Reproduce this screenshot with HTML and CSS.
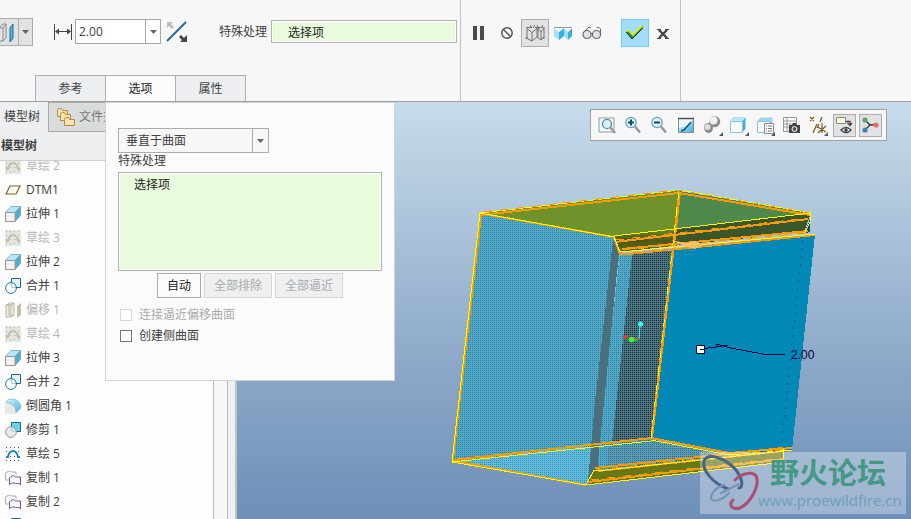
FILE: index.html
```html
<!DOCTYPE html>
<html lang="zh-CN">
<head>
    <meta charset="UTF-8">
    <meta name="viewport" content="width=device-width, initial-scale=1.0">
    <title>偏移</title>
    <link rel="stylesheet" href="styles.css">
</head>
<body>
    <!-- Shared icons -->
    <svg class="sprite" aria-hidden="true">
        <defs>
            <pattern id="grid-dots" width="4" height="4" patternUnits="userSpaceOnUse">
                <rect x="1" y="1" width="1" height="1" fill="#b5b5b0"/>
            </pattern>
            <linearGradient id="ice" x1="0" y1="0" x2="1" y2="1">
                <stop offset="0" stop-color="#d9f2fb"/>
                <stop offset="1" stop-color="#45b3e0"/>
            </linearGradient>
        </defs>
        <symbol id="i-sketch-off" viewBox="0 0 16 16">
            <rect width="16" height="16" fill="#e4e4e1"/>
            <rect width="16" height="16" fill="url(#grid-dots)"/>
            <path d="M1 11h2q1-6 5-6t5 6h2" fill="none" stroke="#c3bfa4" stroke-width="1.800"/>
        </symbol>
        <symbol id="i-sketch" viewBox="0 0 16 16">
            <path d="M1 1.500h1M5 1.500h1M9 1.500h1M13 1.500h1M1 5.500h1M13 5.500h1M5 10.500h1M9 10.500h1M1 14.500h1M5 14.500h1M9 14.500h1M13 14.500h1" stroke="#555"/>
            <path d="M1 11h2q1-6 5-6t5 6h2" fill="none" stroke="#1d87b5" stroke-width="1.800"/>
        </symbol>
        <symbol id="i-plane" viewBox="0 0 16 16">
            <path d="M5 4h10l-4 8H1z" fill="#fffdf5" stroke="#806220" stroke-width="1.200"/>
        </symbol>
        <symbol id="i-extrude" viewBox="0 0 16 16">
            <path d="M.5 6.500L6 .5h9.500L10 6.500z" fill="#b9e5f5" stroke="#8fb5c4"/>
            <path d="M10 6.500L15.500.5v9L10 15.500z" fill="#48aed8" stroke="#7fa9ba"/>
            <rect x=".5" y="6.500" width="9.500" height="9" fill="#f1f1f1" stroke="#999"/>
        </symbol>
        <symbol id="i-merge" viewBox="0 0 16 16">
            <path d="M6.500 6V.5h9v9H11" fill="#e4f5fb" stroke="#17688a"/>
            <path d="M6.500 5v4.500H11" fill="none" stroke="#9aa"/>
            <circle cx="6" cy="10" r="5.400" fill="#fff" fill-opacity=".4" stroke="#1b7398"/>
        </symbol>
        <symbol id="i-offset-off" viewBox="0 0 16 16">
            <path d="M1 3l4-2h4v12l-3 2H1zM1 3h5v12M6 3l3-2M4 2v11h5" fill="#ecebe5" stroke="#bbb7a1"/>
            <path d="M12 4l4-3v12l-4 3z" fill="#c3bfa8"/>
        </symbol>
        <symbol id="i-round" viewBox="0 0 16 16">
            <path d="M0 4h5q6 2 6 8v4H0z" fill="#e8e8e8"/>
            <path d="M4 1h5q7 2 7 9l-5 5q0-8-7-10l-3-1z" fill="url(#ice)" stroke="#86b9cc" stroke-width=".7"/>
        </symbol>
        <symbol id="i-trim" viewBox="0 0 16 16">
            <path d="M6.500.5h9v9h-9z" fill="#6fd0f5" stroke="#17688a"/>
            <circle cx="6" cy="10" r="5.400" fill="#e4e4e4" fill-opacity=".85" stroke="#999"/>
        </symbol>
        <symbol id="i-copy" viewBox="0 0 16 16">
            <path d="M.5 10V3q3-3 6-1h4.500v3M.5 10h3" fill="none" stroke="#aaa"/>
            <path d="M4.500 14.500V8q3-4 6-1h5v7.500q-3-2-5-1-3-2-6 1z" fill="#fbf8fd" stroke="#7b4f9b"/>
        </symbol>
        <symbol id="i-arrow" viewBox="0 0 7 4">
            <path d="M0 0h7L3.500 4z" fill="#666"/>
        </symbol>
    </svg>

    <header class="ribbon">
        <div class="ribbon-main">
            <div class="tool-row">
                <div class="split-btn">
                    <button class="split-icon" aria-label="偏移类型">
                        <svg width="18" height="26" viewBox="0 0 18 26">
                            <path d="M-1 9l4-4h3v14l-3 3h-4M-1 9h4v13M3 9l3-4" fill="none" stroke="#888"/>
                            <path d="M10 9l3-4v14l-3 4z" fill="#5cb7dc" stroke="#176a8e"/>
                        </svg>
                    </button>
                    <button class="split-arrow" aria-label="更多类型"><svg width="7" height="4"><use href="#i-arrow"/></svg></button>
                </div>
                <svg class="dim-icon" width="18" height="16" viewBox="0 0 18 16">
                    <path d="M.5 0v16M17.500 0v16M2 7.500h14" stroke="#444"/>
                    <path d="M1 7.500l4-3v6zM17 7.500l-4-3v6z" fill="#444"/>
                </svg>
                <div class="combo">
                    <input type="text" value="2.00" aria-label="偏移值">
                    <button aria-label="最近值"><svg width="7" height="4"><use href="#i-arrow"/></svg></button>
                </div>
                <button class="flip-btn" aria-label="反向">
                    <svg width="22" height="22" viewBox="0 0 22 22">
                        <path d="M1 20L20 1" stroke="#16688f" stroke-width="1.800"/>
                        <path d="M1 1h6L5 3l3 3-2 2-3-3-2 2z" fill="#bdbdbd"/>
                        <path d="M21 21h-7l2-2-3-3 2-2 3 3 3-3z" fill="#444"/>
                    </svg>
                </button>
                <label for="special">特殊处理</label>
                <input class="collector" type="text" id="special" value="选择项" readonly>
            </div>
            <nav class="tabs">
                <button class="tab">参考</button>
                <button class="tab active">选项</button>
                <button class="tab">属性</button>
            </nav>
        </div>

        <div class="ribbon-actions">
            <button class="action" aria-label="暂停">
                <svg width="14" height="14"><path d="M1 0h4v14H1zM8 0h4v14H8z" fill="#4a4a4a"/></svg>
            </button>
            <button class="action" aria-label="无预览">
                <svg width="14" height="14"><circle cx="7" cy="7" r="5.200" fill="none" stroke="#555" stroke-width="1.500"/><path d="M3.500 3.500l7 7" stroke="#555" stroke-width="1.500"/></svg>
            </button>
            <button class="action pressed" aria-label="分离">
                <svg width="20" height="18" viewBox="0 0 20 18">
                    <path d="M2 4.500l5 4v8.500l-5-2.500zM12 4.500L7 8.500M12 3v10l-5 4M13 4l3 4v8l-3-2zM19 4l-3 4M19 3v10l-3 3M1 3.500h6M10 3.500h8M5 1l2 3M10 1L8 4M12 1l2 3M18 1l-2 3M0 14h3M17 14h3" fill="none" stroke="#666" stroke-width=".9"/>
                </svg>
            </button>
            <button class="action" aria-label="连接">
                <svg width="18" height="15" viewBox="0 0 18 15">
                    <path d="M0 2l5 4v8l-5-4z" fill="#a4ddf2"/>
                    <path d="M5 6l5-4v8l-5 4z" fill="#35b0e3"/>
                    <path d="M10 2l4 4v8l-4-4z" fill="#a4ddf2"/>
                    <path d="M14 6l4-4v8l-4 4z" fill="#35b0e3"/>
                    <path d="M0 2l5 4 5-4 4 4 4-4z" fill="#fff"/>
                    <path d="M0 1.500h18" stroke="#999"/>
                </svg>
            </button>
            <button class="action glasses" aria-label="预览">
                <svg width="20" height="14" viewBox="0 0 20 14">
                    <circle cx="5" cy="8.500" r="4" fill="#dfe5eb" stroke="#666" stroke-width="1.200"/>
                    <circle cx="14.500" cy="8.500" r="4" fill="#dfe5eb" stroke="#666" stroke-width="1.200"/>
                    <path d="M9 8q1-2 2 0M1 7l6-6 2 1M18.500 8V3l-2-2-2 1" fill="none" stroke="#666"/>
                </svg>
            </button>
            <button class="action ok" aria-label="确定">
                <svg width="20" height="16" viewBox="0 0 20 16">
                    <path d="M1 7l3-1 4 4L16 2h3L7 14z" fill="#1d8f52" stroke="#333"/>
                    <path d="M1 6h3l4 4 8-8h3" fill="none" stroke="#e4ef00" stroke-width="1.600"/>
                </svg>
            </button>
            <button class="action cancel" aria-label="取消">
                <svg width="14" height="12"><path d="M3 2l8 8M11 2l-8 8" stroke="#444" stroke-width="2.400"/><path d="M1 1.500h4M9 1.500h4M1 10.500h4M9 10.500h4" stroke="#444"/></svg>
            </button>
        </div>

        <!-- Options slide-down -->
        <section class="options-panel">
            <div class="select-box">
                <select aria-label="偏移方式">
                    <option>垂直于曲面</option>
                </select>
                <svg width="7" height="4"><use href="#i-arrow"/></svg>
            </div>
            <label class="list-label" for="specialList">特殊处理</label>
            <textarea class="collector-list" id="specialList" readonly>选择项</textarea>
            <div class="button-group">
                <button>自动</button>
                <button disabled>全部排除</button>
                <button disabled>全部逼近</button>
            </div>
            <label class="check disabled"><input type="checkbox" disabled>连接逼近偏移曲面</label>
            <label class="check"><input type="checkbox">创建侧曲面</label>
        </section>
    </header>

    <main class="workspace">
        <aside class="sidebar">
            <div class="side-content">
                <div class="side-tabs">
                    <button class="side-tab active">模型树</button>
                    <button class="side-tab">
                        <svg width="20" height="20" viewBox="0 0 20 20">
                            <g fill="#f9e2ae" stroke="#b48a43">
                                <path d="M1.500 3.500q0-2 2-2h2l1 2h5v6h-10z"/>
                                <path d="M4.500 7.500q0-2 2-2h2l1 2h5v6h-10z"/>
                                <path d="M8.500 12.500q0-2 2-2h2l1 2h5v6h-10z"/>
                            </g>
                        </svg>
                        文件夹浏览器
                    </button>
                </div>
                <h2 class="tree-title">模型树</h2>
                <div class="tree-area">
                    <ul class="tree">
                        <li class="off"><svg><use href="#i-sketch-off"/></svg>草绘 2</li>
                        <li><svg><use href="#i-plane"/></svg>DTM1</li>
                        <li><svg><use href="#i-extrude"/></svg>拉伸 1</li>
                        <li class="off"><svg><use href="#i-sketch-off"/></svg>草绘 3</li>
                        <li><svg><use href="#i-extrude"/></svg>拉伸 2</li>
                        <li><svg><use href="#i-merge"/></svg>合并 1</li>
                        <li class="off"><svg><use href="#i-offset-off"/></svg>偏移 1</li>
                        <li class="off"><svg><use href="#i-sketch-off"/></svg>草绘 4</li>
                        <li><svg><use href="#i-extrude"/></svg>拉伸 3</li>
                        <li><svg><use href="#i-merge"/></svg>合并 2</li>
                        <li><svg><use href="#i-round"/></svg>倒圆角 1</li>
                        <li><svg><use href="#i-trim"/></svg>修剪 1</li>
                        <li><svg><use href="#i-sketch"/></svg>草绘 5</li>
                        <li><svg><use href="#i-copy"/></svg>复制 1</li>
                        <li><svg><use href="#i-copy"/></svg>复制 2</li>
                        <li><svg><use href="#i-trim"/></svg></li>
                    </ul>
                    <div class="scroll-track"></div>
                </div>
            </div>
            <div class="splitter"></div>
        </aside>

        <section class="viewport">
            <svg class="model" viewBox="237 102 674 417" preserveAspectRatio="xMidYMid slice">
                <defs>
                    <pattern id="mesh-blue" width="2" height="2" patternUnits="userSpaceOnUse">
                        <rect width="2" height="2" fill="#59a9c6"/><rect width="1" height="1" fill="#1a83a8"/>
                    </pattern>
                    <pattern id="mesh-light" width="2" height="2" patternUnits="userSpaceOnUse">
                        <rect width="2" height="2" fill="#68bbda"/><rect width="1" height="1" fill="#2493ba"/>
                    </pattern>
                    <pattern id="mesh-floor" width="2" height="2" patternUnits="userSpaceOnUse">
                        <rect width="2" height="2" fill="#5f9fb8"/><rect width="1" height="1" fill="#23647f"/>
                    </pattern>
                    <pattern id="mesh-dark" width="2" height="2" patternUnits="userSpaceOnUse">
                        <rect width="2" height="2" fill="#527682"/><rect width="1" height="1" fill="#0b2c3a"/>
                    </pattern>
                    <linearGradient id="rim" x1="0" y1="0" x2="0" y2="1">
                        <stop offset="0" stop-color="#6a8a2c"/><stop offset=".5" stop-color="#4b5718"/><stop offset="1" stop-color="#5c6d18"/>
                    </linearGradient>
                </defs>

                <g class="faces">
                    <path d="M480 213l134 24 6 15-32 226-2 7-134-23z" fill="url(#mesh-blue)"/>
                    <path d="M452 462l162-22-20 35-8 10z" fill="url(#mesh-light)"/>
                    <path d="M632 253l39-4-20 189-42 5z" fill="url(#mesh-dark)"/>
                    <path d="M620 252l12 3-23 216-14 2z" fill="url(#mesh-blue)"/>
                    <path d="M613 240l6 12-22 220-9 9 7-80z" fill="#4a707e"/>
                    <path d="M609 444l42-5 79 16-40 8-84 8z" fill="url(#mesh-floor)"/>
                    <path d="M480 213l200-23-5 39-61 8z" fill="#70922b"/>
                    <path d="M679 191l131 22-136 16z" fill="#50894c"/>
                    <path d="M614 236l60-7-2 17-53 6z" fill="url(#rim)"/>
                    <path d="M674 229l137-16-7 19-132 14z" fill="#39572a"/>
                    <path d="M810 219v13l-4 1-1-2z" fill="#05546e"/>
                    <path d="M671 249l144-15-23 216-64 4-77-16z" fill="#0288b6"/>
                    <path d="M595 470l188-20 1 12-198 23z" fill="#667818"/>
                </g>

                <path class="hidden-edge" d="M803 240L781 448"/>

                <g class="edges under">
                    <path d="M453 459l28-244 198-22 131 22"/>
                    <path d="M484 214l130 23 6 17 8 0 187-19M615 242l193-23"/>
                    <path d="M680 192l-28 246-199 22M651 438l78 15 63-5M588 482l196-23"/>
                    <path d="M595 468l188-20M598 471l185-20M622 249l186-18M586 485l-132-24"/>
                </g>
                <g class="edges">
                    <path d="M452 462l28-249 200-23 131 23-1 9-5 10"/>
                    <path d="M480 213l134 24 6 15 195-18M614 236l197-23M452 462l134 23 198-23"/>
                    <path d="M679 190l-28 248M651 441l-199 21M651 440l78 15 63-5M586 485l8-15 12 0 177-19M783 448l1 14"/>
                </g>
                <g class="edges dashed">
                    <path d="M484 212l194-22 131 23M616 240l192-22M622 250l184-17M651 438l-196 23"/>
                    <path d="M678 200l-27 236M591 480l193-22M597 470l188-20"/>
                </g>

                <path d="M671 240l14 3 10-2 8 4-8 4-13-4z" fill="#ffc266"/>

                <g class="spin">
                    <path d="M640 325l-1 14" stroke="#3ff"/>
                    <path d="M627 337l12 2" stroke="#f33"/>
                    <path d="M631 340h7" stroke="#3f3"/>
                    <circle cx="640.500" cy="324" r="2.500" fill="#3ff"/>
                    <circle cx="625.500" cy="337" r="2" fill="#f33"/>
                    <circle cx="631.500" cy="339.500" r="2.800" fill="#3f3"/>
                </g>

                <g class="dim">
                    <path d="M700 349l16-2v-3l15 4 32 6h22M716 347l12-2"/>
                    <rect x="696.500" y="345.500" width="8" height="8"/>
                    <path d="M700 349.500h5"/>
                    <text x="791" y="359">2.00</text>
                </g>

                <g class="watermark">
                    <rect x="700" y="452" width="206" height="62" fill="#fff" fill-opacity=".33"/>
                    <g fill="none" stroke-linecap="round">
                        <path d="M728 489C712 483 702 470 704 461C708 452 726 458 736 470C742 478 744 487 739 488" stroke="#46658b" stroke-width="3"/>
                        <path d="M735 480C742 473 753 471 756 476C760 484 752 502 740 508C732 510 728 505 733 500" stroke="#a9506f" stroke-width="3"/>
                        <path d="M724 485C714 488 709 496 712 500C716 502 724 499 729 493M721 493l18-9" stroke="#7892b3" stroke-width="2"/>
                    </g>
                    <text class="mark-name" x="770" y="484">野火论坛</text>
                    <text class="mark-url" x="758" y="506">www.proewildfire.cn</text>
                </g>
            </svg>

            <div class="view-toolbar">
                <button aria-label="重新调整"><svg viewBox="0 0 18 18"><path d="M1 16V2h15v14z" fill="#f1f6f8" stroke="#999"/><circle cx="9" cy="8" r="4.500" fill="#dff2fa" stroke="#2882a5" stroke-width="1.200"/><path d="M12 11l5 6" stroke="#999" stroke-width="2.500"/></svg></button>
                <button aria-label="放大"><svg viewBox="0 0 18 18"><circle cx="7" cy="6.500" r="5.200" fill="#dff2fa" stroke="#5aa5c2" stroke-width="1.200"/><path d="M4 6.500h6M7 3.500v6" stroke="#0e4c69" stroke-width="2"/><path d="M11 10.500l5 6" stroke="#999" stroke-width="2.500"/></svg></button>
                <button aria-label="缩小"><svg viewBox="0 0 18 18"><circle cx="7" cy="6.500" r="5.200" fill="#dff2fa" stroke="#5aa5c2" stroke-width="1.200"/><path d="M4 6.500h6" stroke="#0e4c69" stroke-width="2"/><path d="M11 10.500l5 6" stroke="#999" stroke-width="2.500"/></svg></button>
                <button aria-label="重画"><svg viewBox="0 0 18 18"><path d="M1.500 2.500h15v14h-15z" fill="url(#ice)" stroke="#888"/><path d="M2 3h14q-2 7-14 9z" fill="#eaf6fb"/><path d="M1 2.500h16" stroke="#555" stroke-width="1.500"/><path d="M4 15l3-1 7-8" fill="none" stroke="#12597a" stroke-width="1.500"/></svg></button>
                <button class="more" aria-label="渲染"><svg viewBox="0 0 18 18"><path d="M1 11q0-4 5-4l1-5q3-3 8-1 4 4 1 8-2 3-6 2 0 6-5 6-4-1-4-6z" fill="#8b8b8b"/><ellipse cx="10.500" cy="4.500" rx="4" ry="4" fill="#f0f0f0"/><ellipse cx="4.500" cy="11" rx="3" ry="3" fill="#ddd"/></svg></button>
                <button class="more" aria-label="显示样式"><svg viewBox="0 0 18 18"><path d="M1.500 5l3-3.500h12v11l-3 4h-12z" fill="#47afd5"/><path d="M1.500 5l3-3.500h12L13.500 5z" fill="#bbe7f6"/><path d="M1.500 5.500h12v11h-12z" fill="#f7fcfe" stroke="#8ac3da"/></svg></button>
                <button class="more" aria-label="已保存方向"><svg viewBox="0 0 18 18"><path d="M1.500 5l3-3.500h12v11h-15z" fill="#9bd6eb"/><path d="M1.500 5.500h12v11h-12z" fill="#f7fcfe" stroke="#8ac3da"/><path d="M8.500 7.500h9v10h-9z" fill="#fff" stroke="#888"/><path d="M10 10h1M12 10h4M10 12.500h1M12 12.500h4M10 15h1M12 15h4" stroke="#777"/></svg></button>
                <button aria-label="视图管理器"><svg viewBox="0 0 18 18"><path d="M1.500 1.500h13v14h-13zM1.500 5h13M1.500 8h13M1.500 11h13M5 1v14" fill="#fff" stroke="#999"/><path d="M7 9h3l1-2h3l1 2h3v8H7z" fill="#444"/><circle cx="12.500" cy="13" r="2.500" fill="#555" stroke="#fff"/></svg></button>
                <button class="more" aria-label="基准显示"><svg viewBox="0 0 18 18"><path d="M1 1l4 4M5 1L1 5M8 8l-4 9M13 1l-2 5M10 8l-2 4M9 11l8 5M17 10l-8 7M13 7v10" stroke="#7a5a23" stroke-width="1.200"/></svg></button>
                <button class="pressed" aria-label="注释显示"><svg viewBox="0 0 18 18"><path d="M1.500 1.500h9v6h-9z" fill="#fff8dc" stroke="#888"/><path d="M11 5.500h4V9M12.500 7l2.500 2.500L17 7" fill="none" stroke="#444" stroke-width="1.300"/><path d="M6 14q5-5 10 0-5 5-10 0z" fill="#fff" stroke="#444" stroke-width="1.400"/><circle cx="11" cy="14" r="1.800" fill="#444"/></svg></button>
                <button class="pressed" aria-label="旋转中心"><svg viewBox="0 0 18 18"><path d="M4 4l5 5 6-.5M9 9l-5 5" fill="none" stroke="#333" stroke-width="1.300"/><circle cx="4" cy="4" r="2.600" fill="#55a85d"/><circle cx="15" cy="9" r="2.600" fill="#ec6868"/><circle cx="4" cy="14" r="2.600" fill="#3a85b8"/></svg></button>
            </div>
        </section>
    </main>
</body>
</html>
```
FILE: styles.css
```css
* {
    margin: 0;
    padding: 0;
    box-sizing: border-box;
}

body {
    display: flex;
    flex-direction: column;
    height: 100vh;
    overflow: hidden;
    background: #f7f7f7;
    color: #404040;
    font-family: "Open Sans", "Noto Sans CJK SC", sans-serif;
    font-size: 12px;
    line-height: 16px;
}

button,
input,
select,
textarea {
    font: inherit;
    color: inherit;
    border-radius: 0;
}

button {
    display: flex;
    align-items: center;
    justify-content: center;
    border: none;
    background: none;
}

input,
select,
textarea {
    outline: none;
}

.sprite {
    position: absolute;
    width: 0;
    height: 0;
}

/* Ribbon */
.ribbon {
    position: relative;
    z-index: 10;
    display: flex;
    flex: none;
    border-bottom: 1px solid #a0a0a0;
    background: #f7f7f7;
}

.ribbon-main {
    display: flex;
    flex-direction: column;
    justify-content: space-between;
    width: 461px;
    padding-top: 18px;
    border-right: 1px solid #c0c0c2;
}

.tool-row {
    display: flex;
    align-items: center;
    height: 27px;
    margin-bottom: 30px;
}

.split-btn {
    display: flex;
    height: 28px;
    margin-right: 21px;
    border: 1px solid #acacae;
    border-left: none;
    background: #e1e2e4;
}

.split-icon {
    width: 18px;
}

.split-arrow {
    width: 14px;
    border-left: 1px solid #acacae;
}

.dim-icon {
    margin-right: 3px;
}

.combo {
    display: flex;
    width: 86px;
    height: 25px;
    border: 1px solid #a8a8aa;
    background: #fff;
}

.combo input {
    flex: 1;
    min-width: 0;
    padding-left: 3px;
    border: none;
    background: none;
}

.combo button {
    width: 15px;
    border-left: 1px solid #a8a8aa;
}

.flip-btn {
    width: 22px;
    margin: 0 31px 0 5px;
}

.collector {
    flex: 1;
    min-width: 0;
    height: 23px;
    margin: 0 3px 0 4px;
    padding-left: 16px;
    border: 1px solid #b4b4b6;
    background: #eafbdd;
    box-shadow: inset 0 0 0 1px #fff;
    color: #222;
}

.tabs {
    display: flex;
    padding-left: 35px;
}

.tab {
    width: 71px;
    height: 26px;
    margin-right: -1px;
    border: 1px solid #acaeb0;
    border-bottom: none;
    background: #edeff2;
}

.tab.active {
    background: #fcfcfc;
    color: #222;
}

.ribbon-actions {
    display: flex;
    align-items: flex-start;
    width: 220px;
    padding: 19px 0 0 4px;
    border-right: 1px solid #c0c0c2;
}

.action {
    width: 28px;
    height: 28px;
    border: 1px solid transparent;
}

.action.pressed {
    border-color: #acacae;
    background: #e1e2e4;
}

.action.glasses {
    width: 30px;
}

.action.ok {
    margin-left: 14px;
    border-color: #75cbf5;
    background: #a4ddfc;
}

.action.cancel {
    padding-top: 2px;
}

/* Options panel */
.options-panel {
    position: absolute;
    top: 102px;
    left: 105px;
    width: 290px;
    height: 279px;
    padding: 25px 12px 0;
    border: 1px solid #d0d2d3;
    background: #fbfbfb;
}

.select-box {
    display: flex;
    align-items: center;
    width: 151px;
    height: 25px;
    border: 1px solid #acacae;
    background: #f7f7f7;
}

.select-box select {
    flex: 1;
    height: 23px;
    padding-left: 7px;
    border: none;
    border-right: 1px solid #acacae;
    background: none;
    appearance: none;
}

.select-box svg {
    margin: 0 4px;
}

.list-label {
    display: block;
    margin-bottom: 3px;
}

.collector-list {
    display: block;
    width: 264px;
    height: 99px;
    padding: 4px 15px;
    border: 1px solid #b0b0b2;
    background: #eafbdd;
    box-shadow: inset 0 0 0 1px #fff;
    color: #222;
    resize: none;
}

.button-group {
    display: flex;
    justify-content: center;
    gap: 3px;
    margin: 2px 0 6px;
}

.button-group button {
    height: 25px;
    padding: 0 9px;
    border: 1px solid #acacae;
    background: #fbfbfb;
    color: #222;
}

.button-group button:disabled {
    border-color: #d3d5d6;
    background: #edeff1;
    color: #a9abac;
}

.check {
    display: flex;
    align-items: center;
    gap: 7px;
    height: 21px;
    margin-left: 2px;
}

.check.disabled {
    color: #a9abac;
}

.check input {
    width: 12px;
    height: 12px;
    border: 1px solid #777;
    background: #fff;
    appearance: none;
}

.check input:disabled {
    border-color: #d8d8d8;
}

/* Workspace */
.workspace {
    display: flex;
    flex: 1;
    min-height: 0;
}

.sidebar {
    display: flex;
    flex: none;
    width: 237px;
    background: #edeff1;
}

.side-content {
    display: flex;
    flex: 1;
    flex-direction: column;
    min-width: 0;
    border-right: 1px solid #b8babb;
}

.side-tabs {
    display: flex;
    flex: none;
    height: 30px;
}

.side-tab {
    gap: 3px;
    padding: 0 7px;
    border: 1px solid #a6a8aa;
    background: #d9dcdd;
    color: #777;
}

.side-tab.active {
    justify-content: flex-start;
    width: 48px;
    padding: 0 4px;
    border: none;
    background: #edeff1;
    color: #404040;
}

.tree-title {
    flex: none;
    height: 29px;
    padding: 6px 1px;
    border-bottom: 1px solid #cdcfd0;
    font-size: 12px;
    font-weight: 600;
}

.tree-area {
    display: flex;
    flex: 1;
    min-height: 0;
    background: #fdfdfd;
}

.tree {
    flex: 1;
    margin-top: -7px;
    list-style: none;
    clip-path: inset(7px 0 0 0);
}

.tree li {
    display: flex;
    align-items: center;
    gap: 5px;
    height: 24px;
    padding-left: 5px;
}

.tree li.off {
    color: #b4b6b7;
}

.tree svg {
    width: 16px;
    height: 16px;
}

.scroll-track {
    width: 14px;
    border-left: 1px solid #b8babb;
    background: #f7f7f7;
}

.splitter {
    width: 9px;
    border-right: 2px solid #c0c2c3;
}

/* 3D view */
.viewport {
    position: relative;
    flex: 1;
    min-width: 0;
    background: linear-gradient(#c7dceb, #8ba7c7 65%, #6e8fb8);
}

.model {
    display: block;
    width: 100%;
    height: 100%;
}

.edges path,
.hidden-edge {
    fill: none;
    stroke: #ff0;
    shape-rendering: crispEdges;
}

.edges.under path {
    stroke: #ff9a00;
    stroke-width: 2;
}

.edges.dashed path {
    stroke: #ff9a00;
    stroke-dasharray: 8 8;
}

.hidden-edge {
    stroke: #04536f;
    stroke-dasharray: 2 6;
}

.faces {
    shape-rendering: crispEdges;
}

.dim path {
    fill: none;
    stroke: #000033;
    shape-rendering: crispEdges;
}

.dim rect {
    fill: #fff;
    stroke: #000;
}

.dim text {
    fill: #000033;
    font-family: "Liberation Sans", sans-serif;
    font-size: 12px;
}

.mark-name {
    fill: #459885;
    font-size: 29px;
    font-weight: 700;
}

.mark-url {
    fill: #6d9fbb;
    font-size: 15px;
}

.view-toolbar {
    position: absolute;
    top: 7px;
    right: 24px;
    display: flex;
    align-items: center;
    justify-content: space-between;
    width: 297px;
    height: 32px;
    padding: 0 4px;
    border: 1px solid #a0a0a0;
    background: #f7f7f7;
}

.view-toolbar button {
    position: relative;
    width: 23px;
    height: 23px;
    border: 1px solid transparent;
}

.view-toolbar svg {
    flex: none;
    width: 18px;
    height: 18px;
}

.view-toolbar .pressed {
    border-color: #acacae;
    background: #e1e2e4;
}

.view-toolbar .more::after {
    content: "";
    position: absolute;
    right: 0;
    bottom: 0;
    border: 2px solid;
    border-color: transparent #555 #555 transparent;
}
```
